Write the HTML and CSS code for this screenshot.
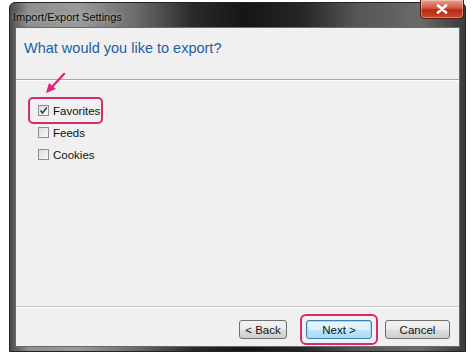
FILE: index.html
```html
<!DOCTYPE html>
<html>
<head>
<meta charset="utf-8">
<link rel="stylesheet" href="styles.css">
</head>
<body>
<div class="window">
  <div class="titlebar">
    <span class="title">Import/Export Settings</span>
    <div class="close"><svg width="14" height="10" viewBox="0 0 14 10"><path d="M3 1.5 L11 8.5 M11 1.5 L3 8.5" stroke="#fff" stroke-width="2.6" stroke-linecap="round"/></svg></div>
  </div>
  <div class="pane">
    <div class="header">What would you like to export?</div>
    <div class="content">
      <svg class="arrow" width="24" height="24" viewBox="0 0 24 24"><path d="M21 2 L8 16" stroke="#e0267a" stroke-width="2.4" stroke-linecap="round"/><path d="M3 21 L6 11 L13 17 Z" fill="#e0267a"/></svg>
      <label class="item hl"><span class="box checked"><svg width="9" height="9" viewBox="0 0 9 9"><path d="M1.5 4.5 L3.5 7 L7.8 1.5" stroke="#2b3f6b" stroke-width="1.6" fill="none"/></svg></span>Favorites</label>
      <label class="item"><span class="box"></span>Feeds</label>
      <label class="item"><span class="box"></span>Cookies</label>
    </div>
    <div class="footer">
      <button class="btn back">&lt; Back</button>
      <span class="ring"><button class="btn primary">Next &gt;</button></span>
      <button class="btn cancel">Cancel</button>
    </div>
  </div>
</div>
</body>
</html>
```
FILE: styles.css
```css
html, body { margin: 0; padding: 0; background: #fff; }
body { width: 474px; height: 355px; overflow: hidden; font-family: "Liberation Sans", Arial, sans-serif; }
.window {
  margin: 2px 0 0 9px;
  width: 457px;
  height: 350px;
  box-sizing: border-box;
  border-radius: 6px 6px 0 0;
  background: linear-gradient(90deg, #4a4a4a 0%, #8e8e8e 4%, #9a9a9a 15%, #6a6a6a 28%, #2a2a2a 40%, #151515 52%, #262626 64%, #555 76%, #6a6a6a 90%, #3a3a3a 100%);
  border: 1px solid #222;
  padding: 0 5px 4px 5px;
  display: flex;
  flex-direction: column;
  position: relative;
}
.titlebar { height: 24px; display: flex; align-items: center; position: relative; }
.title { font-size: 11px; color: #0a0a0a; margin-top: 3px; margin-left: -2px; text-shadow: 0 0 5px rgba(210,210,210,0.8); }
.close {
  position: absolute; right: -4px; top: -3px;
  width: 42px; height: 18px;
  border: 1px solid #5a1a10;
  border-top: none;
  border-radius: 0 0 5px 5px;
  background: linear-gradient(180deg, #e8a090 0%, #d05a40 45%, #b82a12 55%, #c84a2a 100%);
  display: flex; align-items: center; justify-content: center;
  box-shadow: inset 0 0 0 1px rgba(255,255,255,0.35);
}
.pane {
  flex: 1;
  background: #f0f0f0;
  border: 1px solid #6a6a6a;
  display: flex; flex-direction: column;
}
.header {
  height: 52px;
  box-sizing: border-box;
  padding: 6px 0 0 8px;
  font-size: 14.5px;
  color: #2060a0;
  border-bottom: 1px solid #a8a8a8;
  box-shadow: 0 1px 0 #fff;
  line-height: 28px;
}
.content { flex: 1; position: relative; padding: 24px 0 0 22px; display: flex; flex-direction: column; align-items: flex-start; gap: 9px; }
.arrow { position: absolute; left: 27px; top: -8px; }
.item { display: flex; align-items: center; font-size: 11.5px; color: #111; height: 13px; position: relative; }
.item.hl::after {
  content: ""; position: absolute; left: -10px; top: -7px; right: -3px; bottom: -7px;
  border: 2.5px solid #d6296f; border-radius: 5px;
}
.box {
  width: 11px; height: 11px; box-sizing: border-box;
  border: 1px solid #8e8f8f;
  background: linear-gradient(135deg, #dcdcdc, #f8f8f8);
  margin-right: 4px;
  display: flex; align-items: center; justify-content: center;
}
.footer {
  height: 40px;
  box-sizing: border-box;
  border-top: 1px solid #c8c8c8;
  box-shadow: inset 0 1px 0 #fff;
  display: flex; align-items: center; justify-content: flex-end;
  padding: 6px 9px 0 0;
}
.btn {
  font-family: "Liberation Sans", Arial, sans-serif;
  font-size: 11.5px; color: #111;
  height: 19px; padding: 0;
  border: 1px solid #707070; border-radius: 3px;
  background: linear-gradient(180deg, #f2f2f2 0%, #ebebeb 50%, #dddddd 51%, #cfcfcf 100%);
}
.back { width: 48px; margin-right: 13px; }
.ring { border: 2.5px solid #d6296f; border-radius: 6px; padding: 4px 4px; display: flex; margin-right: 7px; }
.btn.primary { width: 66px; border-color: #3c7fb1; box-shadow: inset 0 0 0 1px #9fdcf5; background: linear-gradient(180deg, #eaf6fd 0%, #d9f0fc 50%, #bee6fd 51%, #a7d9f5 100%); }
.cancel { width: 65px; }
```
